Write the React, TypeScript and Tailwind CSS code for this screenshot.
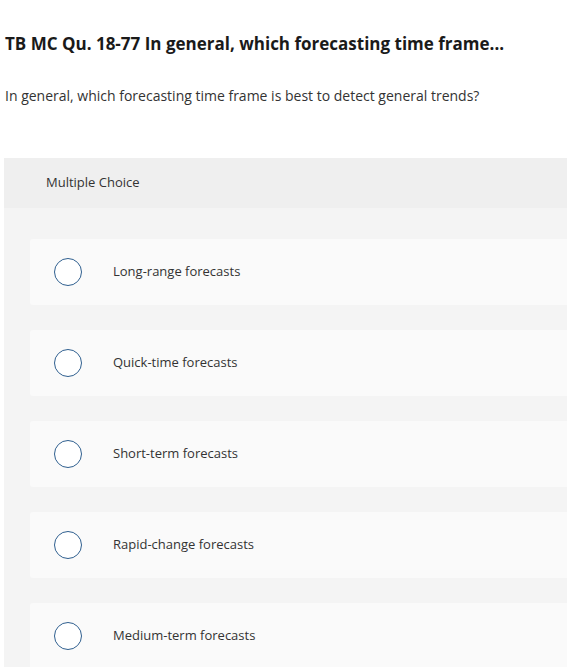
import React from 'react';

const options = [
  'Long-range forecasts',
  'Quick-time forecasts',
  'Short-term forecasts',
  'Rapid-change forecasts',
  'Medium-term forecasts',
];

const App: React.FC = () => {
  return (
    <div className="w-full h-[667px] overflow-hidden bg-white text-[#1f1f1f] font-['Open_Sans',sans-serif]">
      <h1 className="pl-[5px] pt-[31px] text-[17px] leading-[26px] font-bold whitespace-nowrap text-[#1a1a1a]">
        TB MC Qu. 18-77 In general, which forecasting time frame...
      </h1>
      <p className="pl-[5px] mt-[29px] text-[14px] leading-[20px] text-[#333]">
        In general, which forecasting time frame is best to detect general trends?
      </p>
      <div className="ml-[4px] mt-[52px] w-[620px] bg-[#f4f4f4]">
        <div className="h-[50px] bg-[#efefef] pl-[42px] flex items-center text-[13px] text-[#333]">
          Multiple Choice
        </div>
        <div className="pl-[26px] pt-[31px] flex flex-col gap-[25px]">
          {options.map((opt) => (
            <div key={opt} className="h-[66px] bg-[#fafafa] rounded-[3px] flex items-center">
              <div className="ml-[24px] w-[28px] h-[28px] rounded-full border-[1.5px] border-[#2f5f8f] bg-white" />
              <span className="ml-[31px] text-[13px] text-[#333]">{opt}</span>
            </div>
          ))}
        </div>
      </div>
    </div>
  );
};

export default App;
